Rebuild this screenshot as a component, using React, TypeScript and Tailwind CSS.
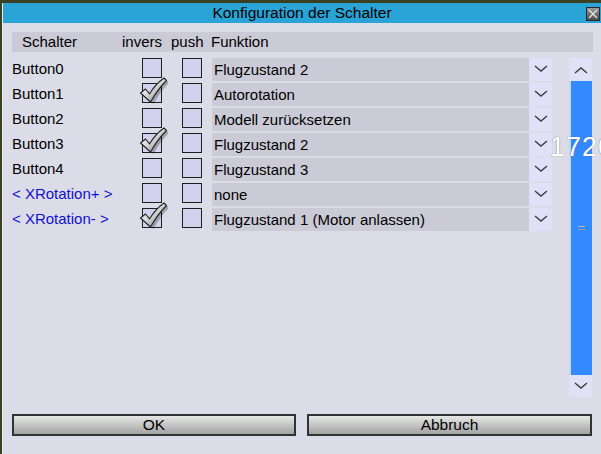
import React from "react";

const rows = [
  { label: "Button0", inv: false, fn: "Flugzustand 2", blue: false },
  { label: "Button1", inv: true, fn: "Autorotation", blue: false },
  { label: "Button2", inv: false, fn: "Modell zurücksetzen", blue: false },
  { label: "Button3", inv: true, fn: "Flugzustand 2", blue: false },
  { label: "Button4", inv: false, fn: "Flugzustand 3", blue: false },
  { label: "< XRotation+ >", inv: false, fn: "none", blue: true },
  { label: "< XRotation- >", inv: true, fn: "Flugzustand 1 (Motor anlassen)", blue: true },
];

function Chevron({ up }: { up?: boolean }) {
  return (
    <svg width="14" height="8" viewBox="0 0 14 8">
      <path
        d={up ? "M1 7 L7 2 L13 7" : "M1 1 L7 6 L13 1"}
        fill="none"
        stroke="#3c3c44"
        strokeWidth="1.4"
      />
    </svg>
  );
}

function Check() {
  return (
    <svg className="absolute left-[-4px] top-[-7px]" width="29" height="27" viewBox="0 0 29 27">
      <defs>
        <linearGradient id="chk" x1="0" y1="0" x2="1" y2="1">
          <stop offset="0" stopColor="#ffffff" />
          <stop offset="0.45" stopColor="#dcdcdc" />
          <stop offset="1" stopColor="#6e6e6e" />
        </linearGradient>
      </defs>
      <path d="M3 17 L8 13 L12 18 Q18 8 26 2 L28.5 5 Q20 13 13 26 Z" fill="#00000040" transform="translate(1.5 1)" />
      <path d="M1.5 16 L6.5 12 L10.5 17 Q16.5 7 25 1 L27.5 3.5 Q19 12 11.5 25 Z" fill="url(#chk)" stroke="#222" strokeWidth="1.1" strokeLinejoin="round" />
    </svg>
  );
}

function Box({ checked }: { checked?: boolean }) {
  return (
    <div className="relative w-[20px] h-[20px] bg-[#d2d2ee] border border-[#1e1e1e]">
      {checked && <Check />}
    </div>
  );
}

export default function App() {
  return (
    <div
      className="w-[601px] h-[454px] pt-[3px] pl-[2px] bg-[#3b4022] overflow-hidden"
      style={{ fontFamily: '"Liberation Sans", Arial, sans-serif' }}
    >
      <div className="relative w-[599px] h-[451px] flex flex-col bg-[#dcdce8] border-l border-[#ececf4]">
        <div className="relative h-[20px] bg-[#2aa3d6] flex items-center justify-center text-[15.5px] text-black">
          Konfiguration der Schalter
          <div className="absolute right-[1px] top-[4px] w-[14px] h-[14px] border border-[#2a2a2a] bg-gradient-to-b from-[#9c9c9c] to-[#4a4a4a] flex items-center justify-center">
            <svg width="10" height="10" viewBox="0 0 10 10">
              <path d="M1 1 L9 9 M9 1 L1 9" stroke="#e8e8e8" strokeWidth="1.3" />
            </svg>
          </div>
        </div>

        <div className="mt-[9px] ml-[9px] mr-[8px] h-[20px] bg-[#cbcbd7] flex items-center text-[15px] text-black">
          <span className="ml-[10px] w-[100px]">Schalter</span>
          <span className="w-[49px]">invers</span>
          <span className="w-[40px]">push</span>
          <span>Funktion</span>
        </div>

        <div className="mt-[6px] ml-[9px] flex">
          <div className="w-[540px] flex flex-col gap-[2px]">
            {rows.map((r, i) => (
              <div key={i} className="flex h-[23px] text-[15px]">
                <div className={`w-[130px] leading-[22px] ${r.blue ? "text-[#1010d0]" : "text-black"}`}>
                  {r.label}
                </div>
                <Box checked={r.inv} />
                <div className="ml-[20px]">
                  <Box />
                </div>
                <div className="ml-[10px] w-[317px] h-[23px] bg-[#cbcbd7] pl-[2px] leading-[23px] text-black">
                  {r.fn}
                </div>
                <div className="w-[23px] h-[23px] bg-[#e0e0f6] flex items-start justify-center pt-[7px]">
                  <Chevron />
                </div>
              </div>
            ))}
          </div>

          <div className="ml-[17px] w-[23px] h-[339px] flex flex-col">
            <div className="h-[23px] bg-[#e0e0f6] flex items-center justify-center">
              <Chevron up />
            </div>
            <div className="flex-1 bg-[#3389fe] border-l-2 border-[#c4d6f6] flex items-center justify-center">
              <div className="flex flex-col gap-[2px]">
                <div className="w-[7px] h-[1px] bg-[#b8b8b8]" />
                <div className="w-[7px] h-[1px] bg-[#9a9a9a]" />
              </div>
            </div>
            <div className="h-[22px] bg-[#e0e0f6] flex items-center justify-center">
              <Chevron />
            </div>
          </div>
        </div>

        <div className="absolute left-[547px] top-[131px] text-[27px] text-white leading-none tracking-[1px] [text-shadow:0_0_1px_#555] whitespace-nowrap">
          1720
        </div>

        <div className="mt-[17px] ml-[9px] flex gap-[11px] text-[15.5px] text-black">
          <div className="w-[284px] h-[22px] border-2 border-[#333] bg-gradient-to-b from-[#e6e8e6] to-[#a2a2a2] flex items-center justify-center">
            OK
          </div>
          <div className="w-[285px] h-[22px] border-2 border-[#333] bg-gradient-to-b from-[#e6e8e6] to-[#a2a2a2] flex items-center justify-center">
            Abbruch
          </div>
        </div>
      </div>
    </div>
  );
}
